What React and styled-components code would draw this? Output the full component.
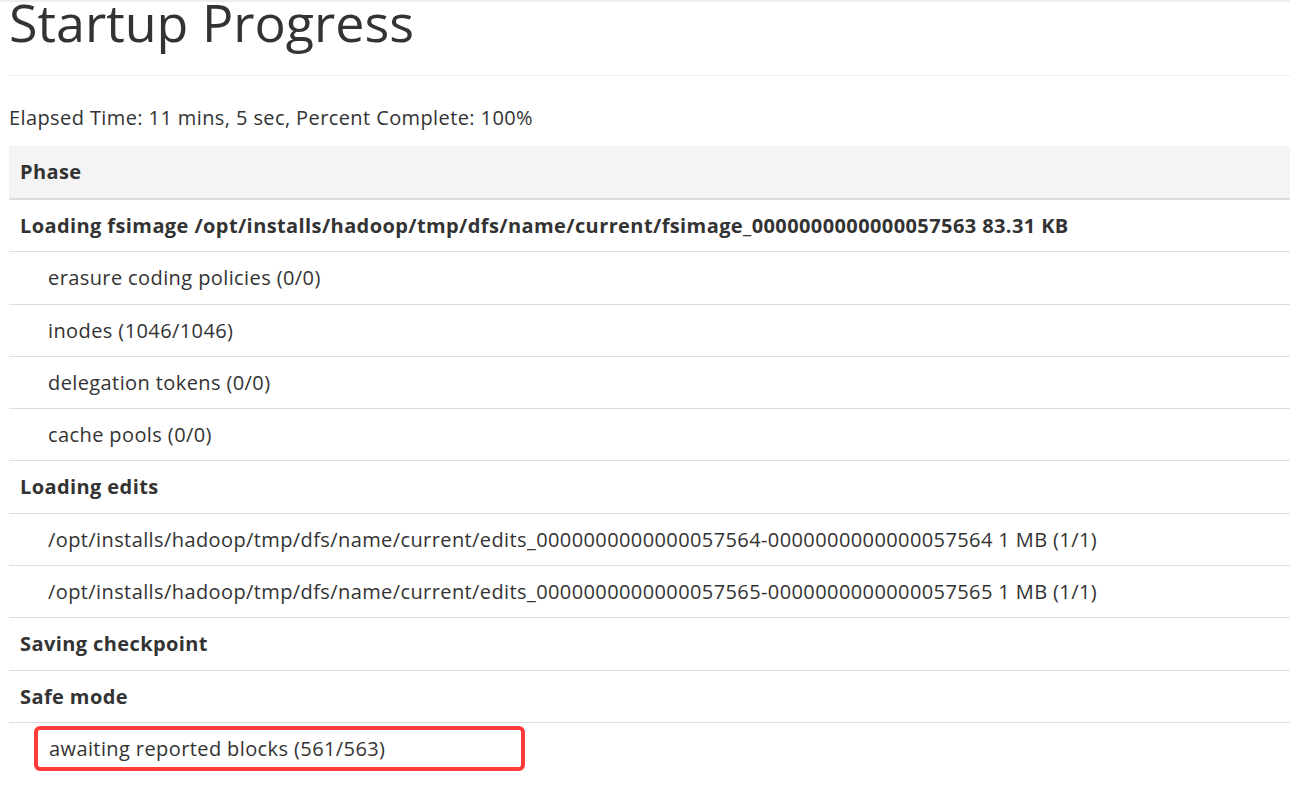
import React from "react";
import styled, { createGlobalStyle } from "styled-components";

const GlobalStyle = createGlobalStyle`
  html, body {
    margin: 0;
    padding: 0;
    background: #fff;
  }
  body {
    font-family: "Open Sans", "Noto Sans", sans-serif;
    font-size: 20px;
    letter-spacing: 0.4px;
    line-height: 28px;
    color: #333;
    border-top: 2px solid #eee;
    overflow: hidden;
  }
`;

const Page = styled.div`
  padding-left: 9px;
`;

const PageHeader = styled.div`
  border-bottom: 1px solid #eee;
  margin-bottom: 28px;
  height: 73px;
  overflow: hidden;
`;

const Title = styled.h1`
  margin: 0;
  font-size: 52px;
  font-weight: 400;
  letter-spacing: 0;
  line-height: 56px;
  margin-top: -8px;
  color: #333;
`;

const Summary = styled.p`
  margin: 0 0 14px;
  line-height: 28px;
`;

const Table = styled.table`
  width: 100%;
  border-collapse: collapse;
  border-spacing: 0;
`;

const HeadCell = styled.th`
  text-align: left;
  font-weight: 700;
  background: #f4f4f4;
  padding: 12px 11px;
  line-height: 28px;
  border-bottom: 2px solid #ddd;
`;

const Cell = styled.td`
  padding: ${(p) => (p.$flag ? "3px 0" : "12px 11px")};
  padding-left: ${(p) => (p.$flag ? "25px" : p.$sub ? "39px" : "11px")};
  font-weight: ${(p) => (p.$phase ? 700 : 400)};
  line-height: 27.3px;
  border-top: 1px solid #ddd;
  white-space: nowrap;
`;

const Flag = styled.span`
  display: inline-block;
  box-sizing: border-box;
  width: 491px;
  height: 45px;
  padding: 0 11px;
  line-height: 37px;
  border: 4px solid #fd3b3b;
  border-radius: 6px;
`;

const rows = [
  { text: "Loading fsimage /opt/installs/hadoop/tmp/dfs/name/current/fsimage_0000000000000057563 83.31 KB", phase: true },
  { text: "erasure coding policies (0/0)" },
  { text: "inodes (1046/1046)" },
  { text: "delegation tokens (0/0)" },
  { text: "cache pools (0/0)" },
  { text: "Loading edits", phase: true },
  { text: "/opt/installs/hadoop/tmp/dfs/name/current/edits_0000000000000057564-0000000000000057564 1 MB (1/1)" },
  { text: "/opt/installs/hadoop/tmp/dfs/name/current/edits_0000000000000057565-0000000000000057565 1 MB (1/1)" },
  { text: "Saving checkpoint", phase: true },
  { text: "Safe mode", phase: true },
  { text: "awaiting reported blocks (561/563)", flag: true },
];

export default function App() {
  return (
    <>
      <GlobalStyle />
      <Page>
        <PageHeader>
          <Title>Startup Progress</Title>
        </PageHeader>
        <Summary>Elapsed Time: 11 mins, 5 sec, Percent Complete: 100%</Summary>
        <Table>
          <thead>
            <tr>
              <HeadCell>Phase</HeadCell>
            </tr>
          </thead>
          <tbody>
            {rows.map((r, i) => (
              <tr key={i}>
                <Cell $phase={r.phase} $sub={!r.phase} $flag={r.flag}>
                  {r.flag ? <Flag>{r.text}</Flag> : r.text}
                </Cell>
              </tr>
            ))}
          </tbody>
        </Table>
      </Page>
    </>
  );
}
